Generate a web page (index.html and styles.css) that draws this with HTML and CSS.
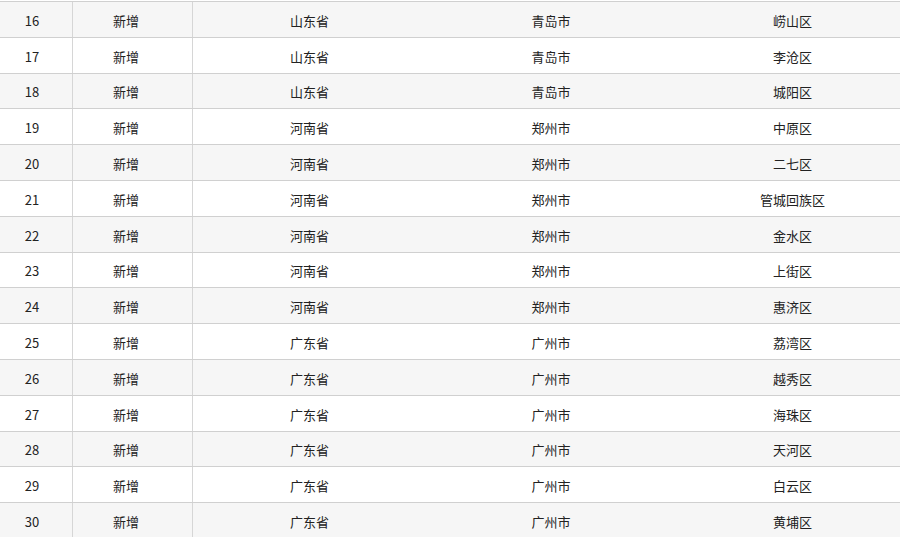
FILE: index.html
```html
<!DOCTYPE html>
<html lang="zh-CN">
<head>
<meta charset="utf-8">
<title>地区列表</title>
<link rel="stylesheet" href="styles.css">
</head>
<body>
<div class="list">
  <div class="row"><span class="c1">16</span><span class="c2">新增</span><span class="c3">山东省</span><span class="c4">青岛市</span><span class="c5">崂山区</span></div>
  <div class="row"><span class="c1">17</span><span class="c2">新增</span><span class="c3">山东省</span><span class="c4">青岛市</span><span class="c5">李沧区</span></div>
  <div class="row"><span class="c1">18</span><span class="c2">新增</span><span class="c3">山东省</span><span class="c4">青岛市</span><span class="c5">城阳区</span></div>
  <div class="row"><span class="c1">19</span><span class="c2">新增</span><span class="c3">河南省</span><span class="c4">郑州市</span><span class="c5">中原区</span></div>
  <div class="row"><span class="c1">20</span><span class="c2">新增</span><span class="c3">河南省</span><span class="c4">郑州市</span><span class="c5">二七区</span></div>
  <div class="row"><span class="c1">21</span><span class="c2">新增</span><span class="c3">河南省</span><span class="c4">郑州市</span><span class="c5">管城回族区</span></div>
  <div class="row"><span class="c1">22</span><span class="c2">新增</span><span class="c3">河南省</span><span class="c4">郑州市</span><span class="c5">金水区</span></div>
  <div class="row"><span class="c1">23</span><span class="c2">新增</span><span class="c3">河南省</span><span class="c4">郑州市</span><span class="c5">上街区</span></div>
  <div class="row"><span class="c1">24</span><span class="c2">新增</span><span class="c3">河南省</span><span class="c4">郑州市</span><span class="c5">惠济区</span></div>
  <div class="row"><span class="c1">25</span><span class="c2">新增</span><span class="c3">广东省</span><span class="c4">广州市</span><span class="c5">荔湾区</span></div>
  <div class="row"><span class="c1">26</span><span class="c2">新增</span><span class="c3">广东省</span><span class="c4">广州市</span><span class="c5">越秀区</span></div>
  <div class="row"><span class="c1">27</span><span class="c2">新增</span><span class="c3">广东省</span><span class="c4">广州市</span><span class="c5">海珠区</span></div>
  <div class="row"><span class="c1">28</span><span class="c2">新增</span><span class="c3">广东省</span><span class="c4">广州市</span><span class="c5">天河区</span></div>
  <div class="row"><span class="c1">29</span><span class="c2">新增</span><span class="c3">广东省</span><span class="c4">广州市</span><span class="c5">白云区</span></div>
  <div class="row"><span class="c1">30</span><span class="c2">新增</span><span class="c3">广东省</span><span class="c4">广州市</span><span class="c5">黄埔区</span></div>
</div>
</body>
</html>
```
FILE: styles.css
```css
html, body {
  margin: 0;
  padding: 0;
  background: #ffffff;
}
body {
  font-family: "Noto Sans CJK SC", "Noto Sans", sans-serif;
  font-size: 13px;
  font-weight: 400;
  color: #222222;
  overflow: hidden;
}
.list {
  margin-top: 1px;
  border-top: 1px solid #d0d0d0;
}
.row {
  display: grid;
  grid-template-columns: 73px 120px 233px 250px 1fr;
  height: 35.8px;
  box-sizing: border-box;
  border-bottom: 1px solid #d0d0d0;
  background: #ffffff;
}
.row:nth-child(odd) {
  background: #f6f6f6;
}
.row span {
  display: flex;
  align-items: center;
  justify-content: center;
  padding-top: 2px;
  box-sizing: border-box;
}
.c1 {
  padding-right: 8px;
  border-right: 1px solid #d6d6d6;
}
.c2 {
  padding-right: 13px;
  border-right: 1px solid #d6d6d6;
}
.c5 {
  padding-left: 9px;
}
```
